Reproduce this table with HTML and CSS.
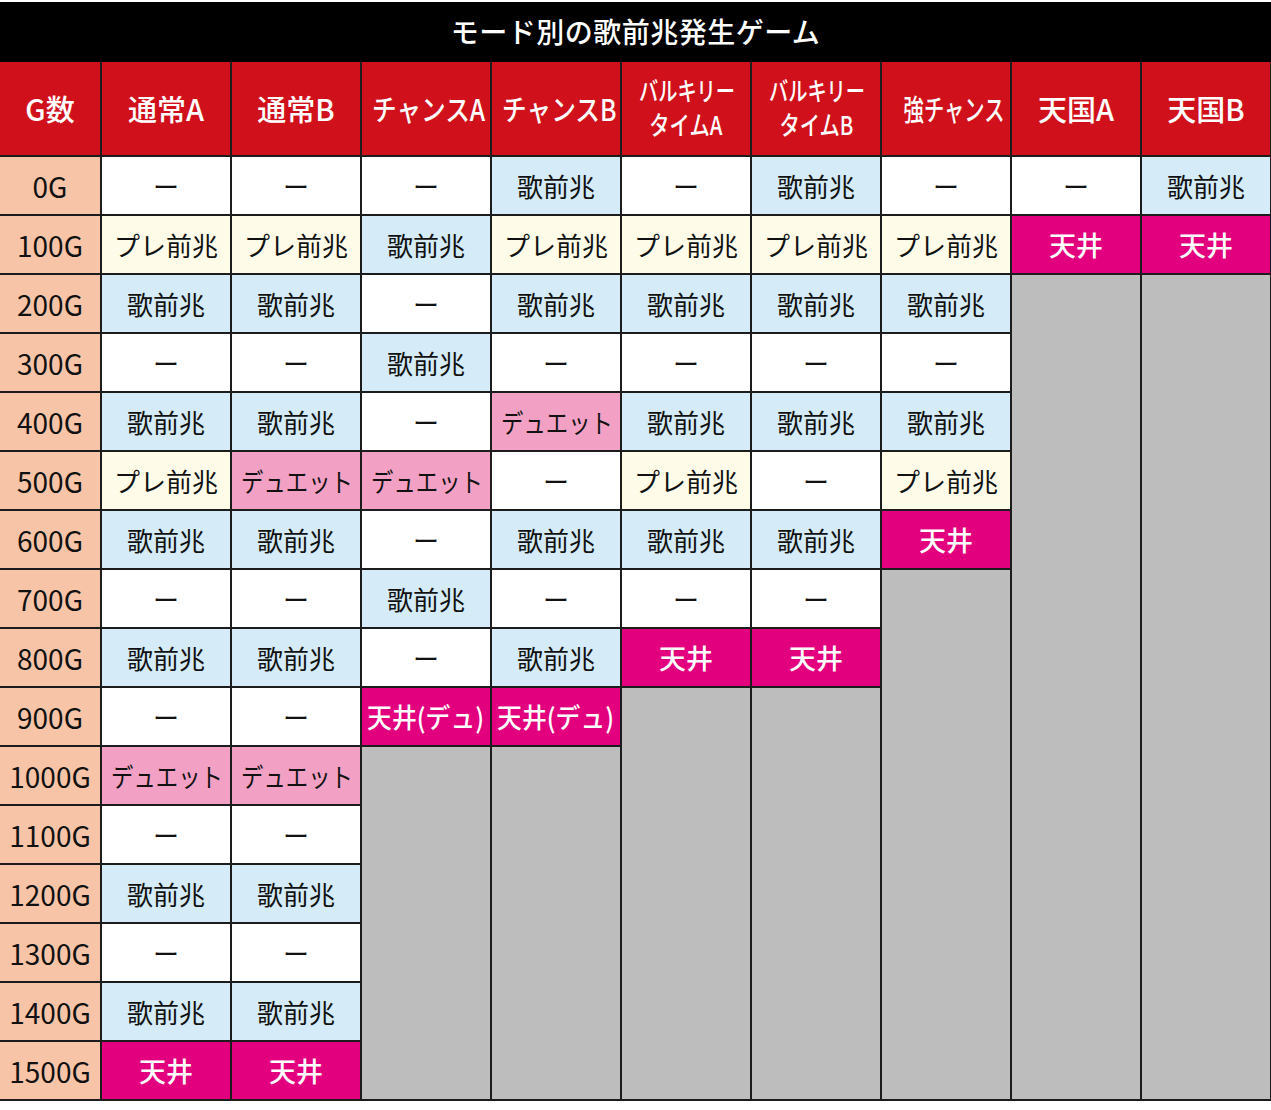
FILE: index.html
```html
<!DOCTYPE html>
<html lang="ja">
<head>
<meta charset="utf-8">
<title>モード別の歌前兆発生ゲーム</title>
<link rel="stylesheet" href="styles.css">
</head>
<body>
<div class="wrap">
  <div class="title">モード別の歌前兆発生ゲーム</div>
  <table class="grid">
    <colgroup>
      <col class="c-g"><col><col><col><col><col><col><col><col><col>
    </colgroup>
    <thead>
      <tr class="head">
        <th>G数</th>
        <th>通常A</th>
        <th>通常B</th>
        <th><span class="sx s85">チャンスA</span></th>
        <th><span class="sx s85">チャンスB</span></th>
        <th class="two"><span class="sx s72">バルキリー</span><br><span class="sx s74">タイムA</span></th>
        <th class="two"><span class="sx s72">バルキリー</span><br><span class="sx s74">タイムB</span></th>
        <th><span class="sx s76">強チャンス</span></th>
        <th>天国A</th>
        <th>天国B</th>
      </tr>
    </thead>
    <tbody>
      <tr>
        <td class="g">0G</td>
        <td class="w">ー</td><td class="w">ー</td><td class="w">ー</td>
        <td class="b">歌前兆</td><td class="w">ー</td><td class="b">歌前兆</td>
        <td class="w">ー</td><td class="w">ー</td><td class="b">歌前兆</td>
      </tr>
      <tr>
        <td class="g">100G</td>
        <td class="c">プレ前兆</td><td class="c">プレ前兆</td><td class="b">歌前兆</td>
        <td class="c">プレ前兆</td><td class="c">プレ前兆</td><td class="c">プレ前兆</td>
        <td class="c">プレ前兆</td><td class="m">天井</td><td class="m">天井</td>
      </tr>
      <tr>
        <td class="g">200G</td>
        <td class="b">歌前兆</td><td class="b">歌前兆</td><td class="w">ー</td>
        <td class="b">歌前兆</td><td class="b">歌前兆</td><td class="b">歌前兆</td>
        <td class="b">歌前兆</td>
        <td class="x" rowspan="14"></td><td class="x" rowspan="14"></td>
      </tr>
      <tr>
        <td class="g">300G</td>
        <td class="w">ー</td><td class="w">ー</td><td class="b">歌前兆</td>
        <td class="w">ー</td><td class="w">ー</td><td class="w">ー</td><td class="w">ー</td>
      </tr>
      <tr>
        <td class="g">400G</td>
        <td class="b">歌前兆</td><td class="b">歌前兆</td><td class="w">ー</td>
        <td class="p"><span class="sx s86">デュエット</span></td><td class="b">歌前兆</td><td class="b">歌前兆</td><td class="b">歌前兆</td>
      </tr>
      <tr>
        <td class="g">500G</td>
        <td class="c">プレ前兆</td><td class="p"><span class="sx s86">デュエット</span></td><td class="p"><span class="sx s86">デュエット</span></td>
        <td class="w">ー</td><td class="c">プレ前兆</td><td class="w">ー</td><td class="c">プレ前兆</td>
      </tr>
      <tr>
        <td class="g">600G</td>
        <td class="b">歌前兆</td><td class="b">歌前兆</td><td class="w">ー</td>
        <td class="b">歌前兆</td><td class="b">歌前兆</td><td class="b">歌前兆</td><td class="m">天井</td>
      </tr>
      <tr>
        <td class="g">700G</td>
        <td class="w">ー</td><td class="w">ー</td><td class="b">歌前兆</td>
        <td class="w">ー</td><td class="w">ー</td><td class="w">ー</td>
        <td class="x" rowspan="9"></td>
      </tr>
      <tr>
        <td class="g">800G</td>
        <td class="b">歌前兆</td><td class="b">歌前兆</td><td class="w">ー</td>
        <td class="b">歌前兆</td><td class="m">天井</td><td class="m">天井</td>
      </tr>
      <tr>
        <td class="g">900G</td>
        <td class="w">ー</td><td class="w">ー</td>
        <td class="m"><span class="sx s92">天井(デュ)</span></td><td class="m"><span class="sx s92">天井(デュ)</span></td>
        <td class="x" rowspan="7"></td><td class="x" rowspan="7"></td>
      </tr>
      <tr>
        <td class="g">1000G</td>
        <td class="p"><span class="sx s86">デュエット</span></td><td class="p"><span class="sx s86">デュエット</span></td>
        <td class="x" rowspan="6"></td><td class="x" rowspan="6"></td>
      </tr>
      <tr>
        <td class="g">1100G</td>
        <td class="w">ー</td><td class="w">ー</td>
      </tr>
      <tr>
        <td class="g">1200G</td>
        <td class="b">歌前兆</td><td class="b">歌前兆</td>
      </tr>
      <tr>
        <td class="g">1300G</td>
        <td class="w">ー</td><td class="w">ー</td>
      </tr>
      <tr>
        <td class="g">1400G</td>
        <td class="b">歌前兆</td><td class="b">歌前兆</td>
      </tr>
      <tr>
        <td class="g">1500G</td>
        <td class="m">天井</td><td class="m">天井</td>
      </tr>
    </tbody>
  </table>
</div>
</body>
</html>
```

FILE: styles.css
```css
* { box-sizing: border-box; }
html, body {
  margin: 0;
  padding: 0;
  background: #ffffff;
}
body {
  font-family: "Noto Sans CJK JP", "Noto Sans", sans-serif;
  color: #111111;
}
.wrap {
  width: 1271px;
  padding-top: 2px;
}
.title {
  height: 60px;
  background: #000000;
  color: #ffffff;
  font-size: 28px;
  font-weight: 500;
  letter-spacing: 0.5px;
  display: flex;
  align-items: center;
  justify-content: center;
  padding-bottom: 2px;
}
.grid {
  width: 1271px;
  border-collapse: collapse;
  table-layout: fixed;
}
.grid col { width: 130px; }
.grid col.c-g { width: 101px; }
.grid th,
.grid td {
  border: 2px solid #1c1c1c;
  text-align: center;
  vertical-align: middle;
  padding: 0;
  white-space: nowrap;
  overflow: hidden;
}
.grid th:first-child,
.grid td:first-child { border-left: none; }
.head { height: 94px; }
.head th {
  background: #d0111c;
  color: #ffffff;
  font-size: 29px;
  font-weight: 500;
  border-top: none;
  padding-bottom: 2px;
}
.head th.two {
  font-size: 26px;
  line-height: 34px;
  padding-bottom: 4px;
}
tbody tr { height: 59px; }
tbody td {
  font-size: 26px;
  font-weight: 400;
  padding-bottom: 1px;
}
td.g {
  background: #f8c4a8;
  font-size: 28px;
}
td.w { background: #ffffff; }
td.b { background: #d5ebf8; }
td.c { background: #fefce9; }
td.p { background: #f2a0c3; }
td.m {
  background: #e3007e;
  color: #ffffff;
  font-weight: 500;
  font-size: 27px;
}
td.x { background: #bdbdbd; }
.sx {
  display: inline-block;
  transform-origin: center;
}
.s72 { transform: scaleX(0.74); }
.s74 { transform: scaleX(0.78); }
.s76 { transform: scaleX(0.70); }
.s85 { transform: scaleX(0.85); }
.s86 { transform: scaleX(0.86); }
.s92 { transform: scaleX(0.92); }
```
